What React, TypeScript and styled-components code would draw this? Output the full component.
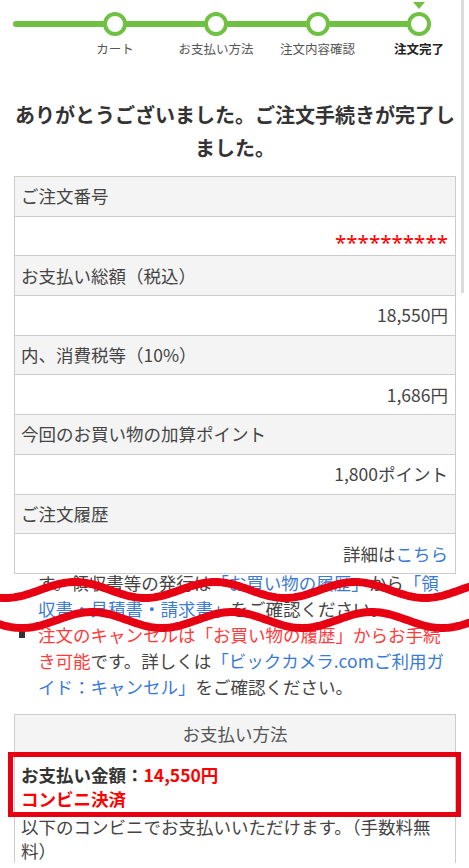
import React from 'react'
import styled, { createGlobalStyle } from 'styled-components'

const GREEN = '#70c043'
const MARK = '#e60012'

const GlobalStyle = createGlobalStyle`
  html, body {
    margin: 0;
    padding: 0;
    overflow: hidden;
    background: #fff;
  }
  body {
    font-family: "Noto Sans CJK JP", "Noto Sans", sans-serif;
    color: #3c3c3c;
  }
`

const Page = styled.div`
  position: relative;
  width: 469px;
  padding: 0 13px 0 14px;
  box-sizing: border-box;
`

const ScrollThumb = styled.div`
  position: fixed;
  top: 0;
  left: 461px;
  width: 3px;
  height: 293px;
  background: #dcdcdc;
`

const StepBar = styled.div`
  position: relative;
  padding-top: 12px;
  display: grid;
  grid-template-columns: 102px 100px 103px 100px;
  padding-left: 50px;

  &::before {
    content: '';
    position: absolute;
    left: -1px;
    top: 21px;
    width: 407px;
    height: 6px;
    border-radius: 3px;
    background: ${GREEN};
  }
`

const Step = styled.div`
  display: flex;
  flex-direction: column;
  align-items: center;
`

const Dot = styled.span<{ $current?: boolean }>`
  position: relative;
  width: 24px;
  height: 24px;
  box-sizing: border-box;
  border: 4px solid ${GREEN};
  border-radius: 50%;
  background: #fff;

  &::before {
    content: '';
    display: ${({ $current }) => ($current ? 'block' : 'none')};
    position: absolute;
    top: -14px;
    left: 50%;
    transform: translateX(-50%);
    border-left: 6px solid transparent;
    border-right: 6px solid transparent;
    border-top: 7px solid ${GREEN};
  }
`

const StepLabel = styled.span<{ $current?: boolean }>`
  margin-top: 5px;
  font-size: 12.5px;
  line-height: 16px;
  white-space: nowrap;
  color: ${({ $current }) => ($current ? '#222' : '#555')};
  font-weight: ${({ $current }) => ($current ? 700 : 400)};
`

const Title = styled.h1`
  margin: 41px 0 0;
  font-size: 20px;
  line-height: 33px;
  font-weight: 700;
  text-align: center;
  color: #333;
`

const Table = styled.div`
  margin-top: 12px;
  border: 1px solid #ccc;
  border-bottom: none;
`

const Row = styled.div<{ $head?: boolean }>`
  height: 39.7px;
  box-sizing: border-box;
  display: flex;
  align-items: center;
  justify-content: ${({ $head }) => ($head ? 'flex-start' : 'flex-end')};
  padding: 0 7px 0 6px;
  border-bottom: 1px solid #ccc;
  background: ${({ $head }) => ($head ? '#f4f4f4' : '#fff')};
  font-size: 17.5px;
  line-height: 24px;
  color: #444;
`

const Secret = styled.span`
  display: inline-block;
  color: #ff0000;
  font-family: "Noto Sans", sans-serif;
  font-size: 20.5px;
  line-height: 24px;
  transform: translateY(5.5px);
`

const Link = styled.a`
  color: #3b7bd4;
  text-decoration: none;
`

const ListWrap = styled.div`
  position: relative;
  margin-top: -4px;
`

const Notes = styled.ul`
  margin: 0;
  padding: 0 0 0 24px;
  list-style: none;
  font-size: 17.5px;
  line-height: 26px;
  color: #444;
`

const Note = styled.li<{ $cont?: boolean }>`
  position: relative;

  &::before {
    content: '';
    display: ${({ $cont }) => ($cont ? 'none' : 'block')};
    position: absolute;
    left: -19px;
    top: 10px;
    width: 6px;
    height: 6px;
    background: #333;
  }
`

const Warn = styled.span`
  color: #ff3b3b;
`

const WaveLayer = styled.svg`
  position: absolute;
  left: -14px;
  top: 0;
  pointer-events: none;
`

const PaymentBox = styled.div`
  position: relative;
  margin-top: 14px;
  border: 1px solid #ccc;
  border-bottom: none;
`

const PaymentHead = styled.div`
  height: 37px;
  display: flex;
  align-items: center;
  justify-content: center;
  background: #f4f4f4;
  font-size: 17.5px;
  color: #555;
`

const PaymentBody = styled.div`
  padding: 11px 6px 0;
  font-size: 17.5px;
  line-height: 24px;
  color: #444;
`

const Strong = styled.div<{ $red?: boolean }>`
  font-weight: 700;
  color: ${({ $red }) => ($red ? '#ff0000' : '#333')};
`

const Amount = styled.span`
  color: #ff0000;
`

const Para = styled.p`
  margin: 4px 0 0;
`

const Highlight = styled.div`
  position: absolute;
  top: 37px;
  left: -7px;
  right: -6px;
  height: 65px;
  box-sizing: border-box;
  border: 5px solid ${MARK};
  pointer-events: none;
`

const wavePath = (center: number, amp: number, crest: number, period: number) => {
  const pts: string[] = []
  for (let x = -10; x <= 480; x += 2) {
    const y = center - amp * Math.cos((2 * Math.PI * (x - crest)) / period)
    pts.push(`${x === -10 ? 'M' : 'L'}${x} ${y.toFixed(2)}`)
  }
  return pts.join(' ')
}

const steps = ['カート', 'お支払い方法', '注文内容確認', '注文完了']

const rows: { label: string; value: React.ReactNode }[] = [
  { label: 'ご注文番号', value: <Secret>**********</Secret> },
  { label: 'お支払い総額（税込）', value: '18,550円' },
  { label: '内、消費税等（10%）', value: '1,686円' },
  { label: '今回のお買い物の加算ポイント', value: '1,800ポイント' },
  {
    label: 'ご注文履歴',
    value: (
      <span>
        詳細は<Link href="#">こちら</Link>
      </span>
    ),
  },
]

export default function App() {
  return (
    <>
      <GlobalStyle />
      <Page>
        <StepBar>
          {steps.map((s, i) => {
            const current = i === steps.length - 1
            return (
              <Step key={s}>
                <Dot $current={current} />
                <StepLabel $current={current}>{s}</StepLabel>
              </Step>
            )
          })}
        </StepBar>

        <Title>ありがとうございました。ご注文手続きが完了しました。</Title>

        <Table>
          {rows.map((r) => (
            <React.Fragment key={r.label}>
              <Row $head>{r.label}</Row>
              <Row>{r.value}</Row>
            </React.Fragment>
          ))}
        </Table>

        <ListWrap>
          <Notes>
            <Note $cont>
              す。領収書等の発行は<Link href="#">「お買い物の履歴」</Link>から
              <Link href="#">「領収書・見積書・請求書」</Link>をご確認ください。
            </Note>
            <Note>
              <Warn>注文のキャンセルは「お買い物の履歴」からお手続き可能</Warn>です。詳しくは
              <Link href="#">「ビックカメラ.comご利用ガイド：キャンセル」</Link>をご確認ください。
            </Note>
          </Notes>
          <WaveLayer width="469" height="72" viewBox="0 0 469 72">
            <path d={wavePath(20, 8, 75, 140)} fill="none" stroke={MARK} strokeWidth="8" />
            <path d={wavePath(50, 8, 92, 140)} fill="none" stroke={MARK} strokeWidth="8" />
          </WaveLayer>
        </ListWrap>

        <PaymentBox>
          <PaymentHead>お支払い方法</PaymentHead>
          <PaymentBody>
            <Strong>
              お支払い金額：<Amount>14,550円</Amount>
            </Strong>
            <Strong $red>コンビニ決済</Strong>
            <Para>以下のコンビニでお支払いいただけます。（手数料無料）</Para>
          </PaymentBody>
          <Highlight />
        </PaymentBox>
      </Page>
      <ScrollThumb />
    </>
  )
}
